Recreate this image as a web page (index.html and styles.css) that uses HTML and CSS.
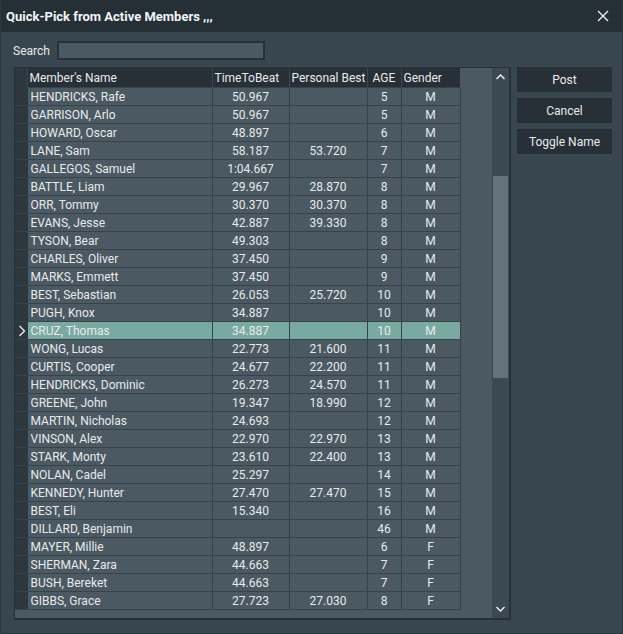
FILE: index.html
```html
<!DOCTYPE html>
<html>
<head>
<meta charset="utf-8">
<link rel="stylesheet" href="styles.css">
</head>
<body>
<div class="window">
  <div class="titlebar">
    <span class="title">Quick-Pick from Active Members ,,,</span>
    <svg class="close" width="12" height="12" viewBox="0 0 12 12"><path d="M1 1L11 11M11 1L1 11" stroke="#f0f0f0" stroke-width="1.4" fill="none"/></svg>
  </div>
  <div class="content">
    <div class="search-row">
      <span class="search-label">Search</span>
      <div class="search-input"></div>
    </div>
    <div class="main">
      <div class="grid-box">
        <div class="grid-area">
          <table class="grid">
            <colgroup>
              <col class="c-ind"><col class="c-name"><col class="c-ttb"><col class="c-pb"><col class="c-age"><col class="c-gen">
            </colgroup>
            <thead>
              <tr><th class="ind"></th><th>Member's Name</th><th>TimeToBeat</th><th>Personal Best</th><th class="ctr">AGE</th><th>Gender</th></tr>
            </thead>
            <tbody>
              <tr><td class="ind"></td><td>HENDRICKS, Rafe</td><td>50.967</td><td></td><td>5</td><td>M</td></tr>
              <tr><td class="ind"></td><td>GARRISON, Arlo</td><td>50.967</td><td></td><td>5</td><td>M</td></tr>
              <tr><td class="ind"></td><td>HOWARD, Oscar</td><td>48.897</td><td></td><td>6</td><td>M</td></tr>
              <tr><td class="ind"></td><td>LANE, Sam</td><td>58.187</td><td>53.720</td><td>7</td><td>M</td></tr>
              <tr><td class="ind"></td><td>GALLEGOS, Samuel</td><td>1:04.667</td><td></td><td>7</td><td>M</td></tr>
              <tr><td class="ind"></td><td>BATTLE, Liam</td><td>29.967</td><td>28.870</td><td>8</td><td>M</td></tr>
              <tr><td class="ind"></td><td>ORR, Tommy</td><td>30.370</td><td>30.370</td><td>8</td><td>M</td></tr>
              <tr><td class="ind"></td><td>EVANS, Jesse</td><td>42.887</td><td>39.330</td><td>8</td><td>M</td></tr>
              <tr><td class="ind"></td><td>TYSON, Bear</td><td>49.303</td><td></td><td>8</td><td>M</td></tr>
              <tr><td class="ind"></td><td>CHARLES, Oliver</td><td>37.450</td><td></td><td>9</td><td>M</td></tr>
              <tr><td class="ind"></td><td>MARKS, Emmett</td><td>37.450</td><td></td><td>9</td><td>M</td></tr>
              <tr><td class="ind"></td><td>BEST, Sebastian</td><td>26.053</td><td>25.720</td><td>10</td><td>M</td></tr>
              <tr><td class="ind"></td><td>PUGH, Knox</td><td>34.887</td><td></td><td>10</td><td>M</td></tr>
              <tr class="sel"><td class="ind"><svg width="8" height="12" viewBox="0 0 8 12"><path d="M1.5 1L6.5 6L1.5 11" stroke="#f0f0f0" stroke-width="1.3" fill="none"/></svg></td><td>CRUZ, Thomas</td><td>34.887</td><td></td><td>10</td><td>M</td></tr>
              <tr><td class="ind"></td><td>WONG, Lucas</td><td>22.773</td><td>21.600</td><td>11</td><td>M</td></tr>
              <tr><td class="ind"></td><td>CURTIS, Cooper</td><td>24.677</td><td>22.200</td><td>11</td><td>M</td></tr>
              <tr><td class="ind"></td><td>HENDRICKS, Dominic</td><td>26.273</td><td>24.570</td><td>11</td><td>M</td></tr>
              <tr><td class="ind"></td><td>GREENE, John</td><td>19.347</td><td>18.990</td><td>12</td><td>M</td></tr>
              <tr><td class="ind"></td><td>MARTIN, Nicholas</td><td>24.693</td><td></td><td>12</td><td>M</td></tr>
              <tr><td class="ind"></td><td>VINSON, Alex</td><td>22.970</td><td>22.970</td><td>13</td><td>M</td></tr>
              <tr><td class="ind"></td><td>STARK, Monty</td><td>23.610</td><td>22.400</td><td>13</td><td>M</td></tr>
              <tr><td class="ind"></td><td>NOLAN, Cadel</td><td>25.297</td><td></td><td>14</td><td>M</td></tr>
              <tr><td class="ind"></td><td>KENNEDY, Hunter</td><td>27.470</td><td>27.470</td><td>15</td><td>M</td></tr>
              <tr><td class="ind"></td><td>BEST, Eli</td><td>15.340</td><td></td><td>16</td><td>M</td></tr>
              <tr><td class="ind"></td><td>DILLARD, Benjamin</td><td></td><td></td><td>46</td><td>M</td></tr>
              <tr><td class="ind"></td><td>MAYER, Millie</td><td>48.897</td><td></td><td>6</td><td>F</td></tr>
              <tr><td class="ind"></td><td>SHERMAN, Zara</td><td>44.663</td><td></td><td>7</td><td>F</td></tr>
              <tr><td class="ind"></td><td>BUSH, Bereket</td><td>44.663</td><td></td><td>7</td><td>F</td></tr>
              <tr><td class="ind"></td><td>GIBBS, Grace</td><td>27.723</td><td>27.030</td><td>8</td><td>F</td></tr>
            </tbody>
          </table>
        </div>
        <div class="scrollbar">
          <svg class="arrow" width="17" height="18" viewBox="0 0 17 18"><path d="M4.5 11L8.5 7L12.5 11" stroke="#f0f0f0" stroke-width="1.4" fill="none"/></svg>
          <div class="track"><div class="thumb"></div></div>
          <svg class="arrow" width="17" height="18" viewBox="0 0 17 18"><path d="M4.5 7L8.5 11L12.5 7" stroke="#f0f0f0" stroke-width="1.4" fill="none"/></svg>
        </div>
      </div>
      <div class="buttons">
        <div class="btn">Post</div>
        <div class="btn">Cancel</div>
        <div class="btn">Toggle Name</div>
      </div>
    </div>
  </div>
</div>
</body>
</html>
```

FILE: styles.css
```css
html, body {
  margin: 0;
  padding: 0;
  background: #38474f;
}
body {
  font-family: Roboto, "Noto Sans", sans-serif;
  font-size: 12px;
  color: #e8eaeb;
}
.window {
  width: 623px;
  height: 634px;
  box-sizing: border-box;
  background: #38474f;
  border-left: 1px solid #2c383e;
  border-right: 1px solid #2c383e;
  border-bottom: 1px solid #2c383e;
  display: flex;
  flex-direction: column;
}
.titlebar {
  height: 32px;
  background: #252f36;
  display: flex;
  align-items: center;
  justify-content: space-between;
  padding: 0 13px 0 5px;
  flex: none;
}
.title {
  font-family: Roboto, "Noto Sans", sans-serif;
  font-weight: bold;
  font-size: 13px;
  color: #f2f4f5;
}
.close { display: block; }
.content {
  padding: 9px 0 0 12px;
}
.search-row {
  display: flex;
  align-items: center;
  height: 19px;
}
.search-label {
  width: 44px;
  color: #e8eaeb;
}
.search-input {
  width: 204px;
  height: 15px;
  background: #4a5962;
  border: 2px solid #263238;
}
.main {
  display: flex;
  gap: 6px;
  margin-top: 7px;
  margin-left: 1px;
}
.grid-box {
  width: 494px;
  height: 550px;
  background: #4a5962;
  border: 1px solid #263036;
  border-right: 2px solid #263036;
  border-bottom: 2px solid #263036;
  display: flex;
}
.grid-area {
  flex: 1;
  overflow: hidden;
}
.grid {
  border-collapse: collapse;
  table-layout: fixed;
  width: 445px;
}
.c-ind { width: 12px; }
.c-name { width: 185px; }
.c-ttb { width: 77px; }
.c-pb { width: 78px; }
.c-age { width: 34px; }
.c-gen { width: 59px; }
.grid th {
  height: 19px;
  padding: 0 0 0 2px;
  background: #263036;
  font-weight: normal;
  text-align: left;
  color: #e8eaeb;
  border-left: 1px solid #3a474e;
  white-space: nowrap;
  overflow: hidden;
}
.grid th.ind { border-left: none; background: #2c383e; }
.grid th.ctr { text-align: center; padding: 0; }
.grid td {
  height: 17px;
  padding: 0;
  border: 1px solid #36434a;
  text-align: center;
  white-space: nowrap;
  overflow: hidden;
}
.grid td:nth-child(2) {
  text-align: left;
  padding-left: 3px;
}
.grid td.ind {
  background: #2c383e;
  border-color: #2c383e;
  border-bottom-color: #36434a;
  border-left: none;
  text-align: left;
  padding-left: 3px;
}
.grid td.ind svg { display: block; }
.grid tr.sel td { background: #78aaa2; }
.grid tr.sel td.ind { background: #2c383e; }
.scrollbar {
  width: 17px;
  background: #3b4a52;
  display: flex;
  flex-direction: column;
}
.arrow { display: block; flex: none; }
.track {
  flex: 1;
}
.thumb {
  margin: 90px 1px 0 1px;
  height: 202px;
  background: #647279;
}
.buttons {
  display: flex;
  flex-direction: column;
  gap: 6px;
}
.btn {
  width: 95px;
  height: 25px;
  background: #263036;
  color: #e8eaeb;
  display: flex;
  align-items: center;
  justify-content: center;
}
```
